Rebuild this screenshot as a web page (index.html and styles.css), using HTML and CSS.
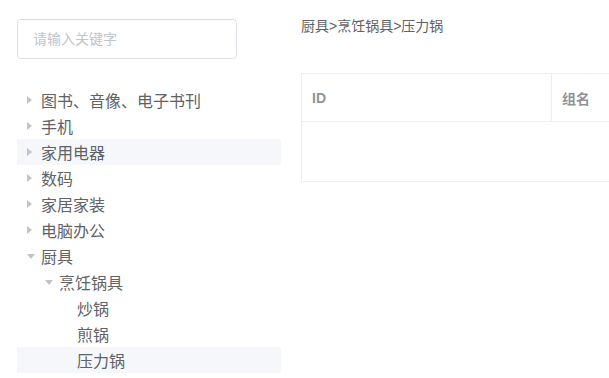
FILE: index.html
```html
<!DOCTYPE html>
<html>
<head>
    <title>分类</title>
    <link rel="stylesheet" href="styles.css">
</head>
<body>
    <div class="page">
        <div class="side">
            <div class="search">
                <input type="text" placeholder="请输入关键字">
            </div>
            <div class="tree">
                <div class="node"><span class="caret"></span><span class="label">图书、音像、电子书刊</span></div>
                <div class="node"><span class="caret"></span><span class="label">手机</span></div>
                <div class="node hover"><span class="caret"></span><span class="label">家用电器</span></div>
                <div class="node"><span class="caret"></span><span class="label">数码</span></div>
                <div class="node"><span class="caret"></span><span class="label">家居家装</span></div>
                <div class="node"><span class="caret"></span><span class="label">电脑办公</span></div>
                <div class="node"><span class="caret open"></span><span class="label">厨具</span></div>
                <div class="node level-2"><span class="caret open"></span><span class="label">烹饪锅具</span></div>
                <div class="node level-3"><span class="caret leaf"></span><span class="label">炒锅</span></div>
                <div class="node level-3"><span class="caret leaf"></span><span class="label">煎锅</span></div>
                <div class="node level-3 current"><span class="caret leaf"></span><span class="label">压力锅</span></div>
            </div>
        </div>
        <div class="main">
            <div class="crumb">厨具&gt;烹饪锅具&gt;压力锅</div>
            <div class="table">
                <div class="thead">
                    <div class="th col-id">ID</div>
                    <div class="th col-name">组名</div>
                </div>
                <div class="empty"></div>
            </div>
        </div>
    </div>
</body>
</html>
```
FILE: styles.css
```css
body {
    margin: 0;
    font-family: "Helvetica Neue", "Liberation Sans", "Noto Sans CJK SC", sans-serif;
    color: #606266;
    background: #fff;
    overflow: hidden;
}

.page {
    display: flex;
    gap: 20px;
    padding: 19px 0 0 17px;
}

.side {
    width: 264px;
    flex: none;
}

.search input {
    box-sizing: border-box;
    width: 220px;
    height: 40px;
    padding: 0 15px;
    border: 1px solid #dcdfe6;
    border-radius: 4px;
    font-family: inherit;
    font-size: 14px;
    color: #606266;
    outline: none;
}

.search input::placeholder {
    color: #c0c4cc;
}

.tree {
    margin-top: 28px;
}

.node {
    display: flex;
    align-items: center;
    height: 26px;
    font-size: 16px;
    cursor: pointer;
}

.node.hover,
.node.current {
    background: #f5f7fa;
}

.caret {
    width: 24px;
    height: 26px;
    flex: none;
    position: relative;
}

.caret::after {
    content: "";
    position: absolute;
    left: 10px;
    top: 9px;
    border-left: 5px solid #c0c4cc;
    border-top: 4px solid transparent;
    border-bottom: 4px solid transparent;
}

.caret.open::after {
    left: 10px;
    top: 11px;
    border-top: 5px solid #c0c4cc;
    border-left: 4px solid transparent;
    border-right: 4px solid transparent;
    border-bottom: none;
}

.caret.leaf::after {
    display: none;
}

.level-2 {
    padding-left: 18px;
}

.level-3 {
    padding-left: 36px;
}

.main {
    flex: 1;
    min-width: 0;
    overflow: hidden;
}

.crumb {
    font-size: 14px;
    line-height: 14px;
    color: #606266;
}

.table {
    width: 900px;
    margin-top: 40px;
    border: 1px solid #ebeef5;
}

.thead {
    display: flex;
    height: 47px;
    border-bottom: 1px solid #ebeef5;
}

.th {
    box-sizing: border-box;
    padding: 0 10px;
    display: flex;
    align-items: center;
    font-size: 14px;
    font-weight: bold;
    color: #909399;
}

.col-id {
    width: 250px;
    border-right: 1px solid #ebeef5;
}

.col-name {
    flex: 1;
}

.empty {
    height: 59px;
}
```
